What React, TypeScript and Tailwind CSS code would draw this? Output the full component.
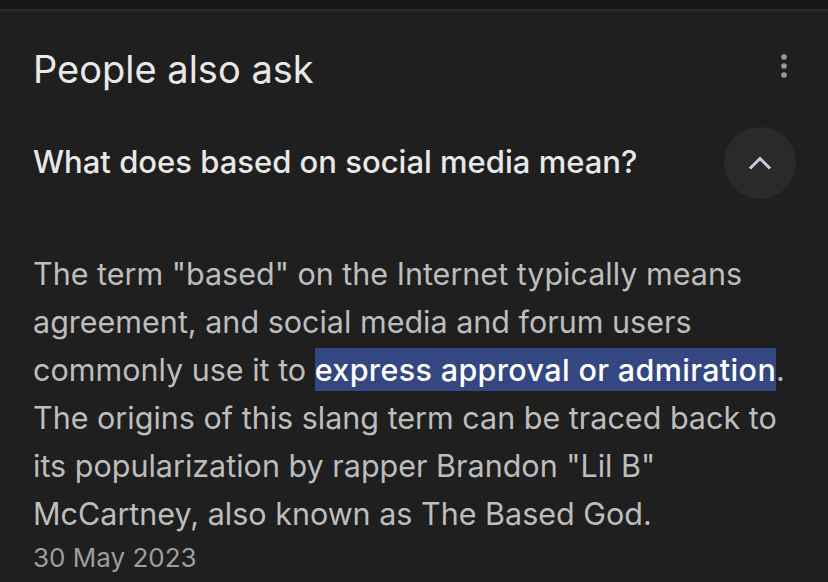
export default function App() {
  return (
    <div className="w-[828px] h-[582px] overflow-hidden bg-[#1f1f1f] font-['Inter',sans-serif]">
      <div className="h-[9px] bg-[#171717]" />
      <div className="h-[2px] bg-[#2b2b2b]" />
      <div className="px-[33px]">
        <div className="flex items-start justify-between mt-[38px]">
          <h2 className="text-[38px] leading-[40px] text-[#e8e8e8]">People also ask</h2>
          <svg width="8" height="26" viewBox="0 0 8 26" className="mr-[7px] mt-[4px]">
            <circle cx="4" cy="4" r="2.8" fill="#9a9a9a" />
            <circle cx="4" cy="13" r="2.8" fill="#9a9a9a" />
            <circle cx="4" cy="22" r="2.8" fill="#9a9a9a" />
          </svg>
        </div>
        <div className="flex items-center justify-between mt-[38px]">
          <p className="text-[31px] leading-[40px] font-medium text-[#e8e8e8] mt-[-2px]">What does based on social media mean?</p>
          <button className="w-[72px] h-[72px] rounded-full bg-[#2a2a2a] flex items-center justify-center mr-[-1px]">
            <svg width="28" height="28" viewBox="0 0 28 28" fill="none" stroke="#c6cae6" strokeWidth="3" strokeLinecap="square">
              <path d="M5 18.5L14 9.5L23 18.5" />
            </svg>
          </button>
        </div>
        <p className="mt-[51px] text-[30.5px] leading-[48px] text-[#bdbdbd] whitespace-nowrap">
          The term "based" on the Internet typically means
          <br />
          agreement, and social media and forum users
          <br />
          commonly use it to{" "}
          <span className="bg-[#354780] text-white font-medium tracking-[0.35px] py-[3px]">express approval or admiration</span>.
          <br />
          The origins of this slang term can be traced back to
          <br />
          its popularization by rapper Brandon "Lil B"
          <br />
          McCartney, also known as The Based God.
        </p>
        <p className="mt-[4px] text-[26px] leading-[32px] text-[#9e9e9e]">30 May 2023</p>
      </div>
    </div>
  );
}
